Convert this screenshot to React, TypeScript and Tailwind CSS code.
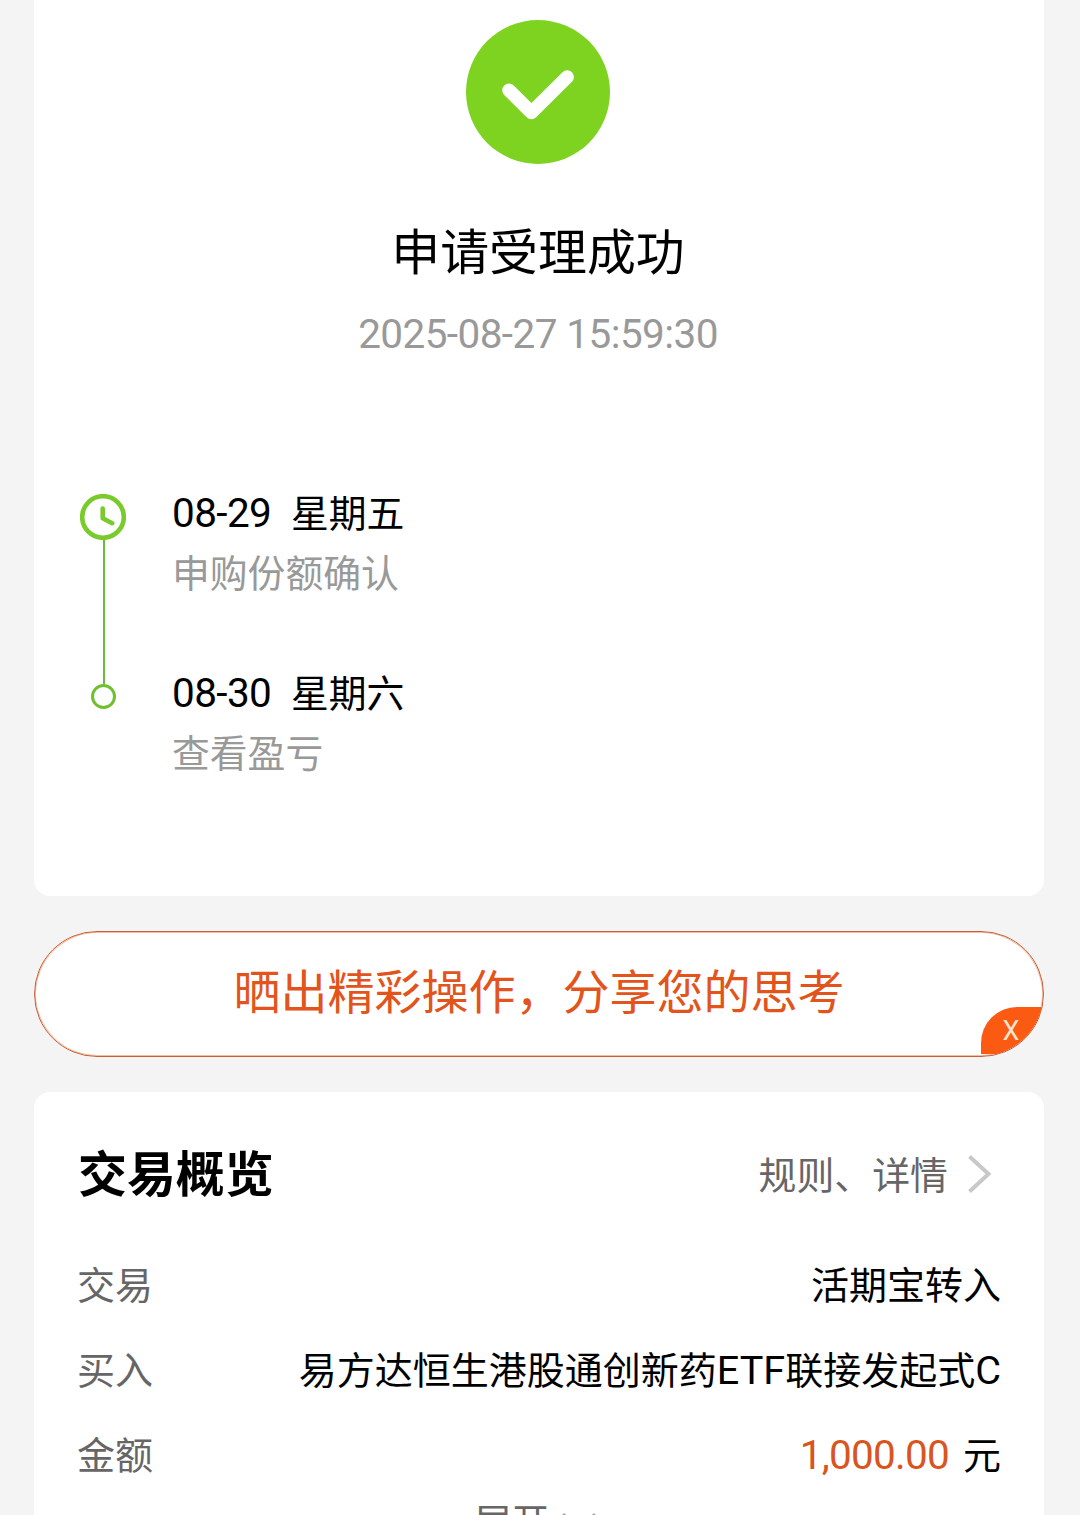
import React from 'react';

const steps = [
  { date: '08-29', jour: '星期五', label: '申购份额确认' },
  { date: '08-30', jour: '星期六', label: '查看盈亏' },
];

const ClockIcon = () => (
  <svg className="block h-[46px] w-[46px]" viewBox="0 0 46 46" fill="none" stroke="#78cb2b">
    <circle cx="23" cy="23" r="20.8" strokeWidth="4.6" />
    <path d="M22.7 14.5V24.2L32.2 29.2" strokeWidth="4.6" strokeLinecap="round" strokeLinejoin="round" />
  </svg>
);

const Result = () => (
  <section className="flex h-[896px] flex-col rounded-b-[16px] bg-white pt-5">
    <div className="flex flex-col items-center pr-[2px]">
      <svg className="block h-36 w-36" viewBox="0 0 144 144" fill="none">
        <circle cx="72" cy="72" r="72" fill="#7ed321" />
        <path d="M43 70.3L65.4 92.5L101.2 57" stroke="#fff" strokeWidth="13.5" strokeLinecap="round" strokeLinejoin="round" />
      </svg>
      <h1 className="mt-[54px] text-[48.9px] leading-[72px] text-black">申请受理成功</h1>
      <p className="mt-[14px] text-[40.5px] leading-[60px] tracking-[-0.58px] text-[#999999]">2025-08-27 15:59:30</p>
    </div>

    <div className="mt-[120px] flex pl-[46px]">
      <div className="mt-[10px] flex w-[46px] flex-col items-center">
        <ClockIcon />
        <div className="ml-[2px] h-[144px] w-[2px] bg-[#6fb83c]" />
        <div className="ml-[1px] h-[25px] w-[25px] shrink-0 rounded-full border-3 border-[#6fc02f]" />
      </div>
      <div className="ml-[46px] flex flex-col gap-[60px]">
        {steps.map((s) => (
          <div key={s.date}>
            <div className="flex h-[60px] items-center text-black">
              <span className="w-[100px] pb-[2px] text-[40.5px] leading-[60px] tracking-[-0.6px]">{s.date}</span>
              <span className="ml-[19px] text-[37.8px] leading-[60px]">{s.jour}</span>
            </div>
            <p className="text-[37.8px] leading-[60px] text-[#999999]">{s.label}</p>
          </div>
        ))}
      </div>
    </div>
  </section>
);

const ShareButton = () => (
  <div className="relative mt-[35px] flex h-[126px] items-center justify-center overflow-hidden rounded-full border border-[#c95f35] bg-white pb-[2px] shadow-[inset_0_0_0_1px_#f3bfa4]">
    <span className="text-[47px] leading-[70px] text-[#e2541b]">晒出精彩操作，分享您的思考</span>
    <button className="absolute right-0 bottom-[2px] flex h-[47px] w-[62px] items-center justify-center rounded-tl-[36px] bg-[#fa5a12] pt-[2px] pr-[2px] text-[27px] leading-none text-[#ffe6d0]">
      X
    </button>
  </div>
);

const Row = ({ label, children }: { label: string; children: React.ReactNode }) => (
  <div className="-mr-[1px] -ml-[1px] flex h-[85px] items-center justify-between text-[38px] leading-[60px]">
    <span className="text-[#666666]">{label}</span>
    <span className="text-black">{children}</span>
  </div>
);

const Overview = () => (
  <section className="mt-[35px] h-[423px] overflow-hidden rounded-t-[16px] bg-white pr-11 pl-11">
    <div className="flex h-[151px] items-center justify-between pt-[16px]">
      <h2 className="text-[48.9px] leading-[72px] font-bold text-black">交易概览</h2>
      <div className="flex items-center pr-[8px] text-[37.9px] leading-[60px] text-[#666666]">
        规则、详情
        <svg className="mb-[3px] ml-[20px] h-[38px] w-[24px]" viewBox="0 0 24 38" fill="none" stroke="#c8c8c8" strokeWidth="4">
          <path d="M1.5 1.5L20.5 19L1.5 36.5" />
        </svg>
      </div>
    </div>
    <Row label="交易">活期宝转入</Row>
    <Row label="买入">
      易方达恒生港股通创新药<span className="text-[39.6px]">ETF</span>联接发起式<span className="text-[39.6px]">C</span>
    </Row>
    <Row label="金额">
      <span className="text-[40.5px] tracking-[-0.75px] text-[#d9541e]">1,000.00</span>
      <span className="ml-[14px]">元</span>
    </Row>
    <div className="-mt-[5px] flex items-start justify-center pr-[6px] text-[37.8px] leading-[60px] text-[#666666]">
      展开
      <svg className="mt-[19px] ml-[11px] h-[20px] w-[38px]" viewBox="0 0 38 20" fill="none" stroke="#aaaaaa" strokeWidth="3">
        <path d="M3 2L19 17L35 2" />
      </svg>
    </div>
  </section>
);

const App = () => (
  <main className="h-[1515px] w-[1080px] overflow-hidden bg-[#f4f4f4] pr-9 pl-[34px] font-[Roboto,'Noto_Sans_CJK_SC',sans-serif]">
    <Result />
    <ShareButton />
    <Overview />
  </main>
);

export default App;
